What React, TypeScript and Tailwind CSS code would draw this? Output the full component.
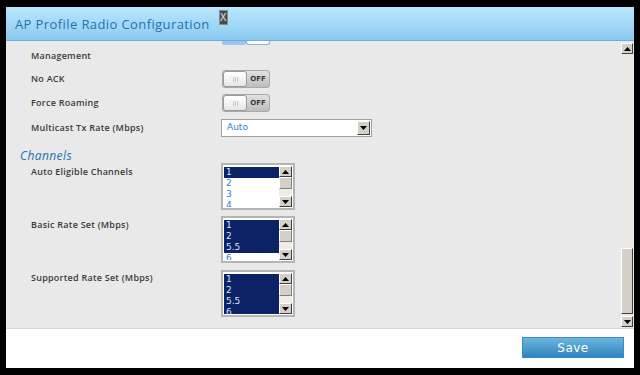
import React from 'react'

const labelFont = { fontFamily: '"Open Sans", "DejaVu Sans", sans-serif' }

function Toggle() {
  return (
    <div className="flex h-[18px] w-[48px] rounded-[3px] border border-[#a8a8a8] bg-gradient-to-b from-[#e2e2e2] to-[#bdbdbd]">
      <div className="flex h-full w-[24px] items-center justify-center gap-[1px] rounded-[3px] border border-[#9a9a9a] bg-gradient-to-b from-[#ffffff] to-[#e6e6e6]">
        <span className="h-[5px] w-[1px] bg-[#c8c8c8]" />
        <span className="h-[5px] w-[1px] bg-[#c8c8c8]" />
        <span className="h-[5px] w-[1px] bg-[#c8c8c8]" />
      </div>
      <div className="flex flex-1 items-center justify-center text-[7px] font-bold tracking-normal text-[#3a3a3a]" style={{ fontFamily: '"DejaVu Sans", sans-serif' }}>
        OFF
      </div>
    </div>
  )
}

function Arrow({ up }: { up?: boolean }) {
  return (
    <svg width="7" height="4" viewBox="0 0 7 4">
      {up ? <path d="M0 4 L3.5 0 L7 4 Z" fill="#000" /> : <path d="M0 0 L7 0 L3.5 4 Z" fill="#000" />}
    </svg>
  )
}

function SbButton({ up, h = 'h-[11px]' }: { up?: boolean; h?: string }) {
  return (
    <div className={`flex ${h} w-full items-center justify-center border border-t-white border-l-white border-r-[#404040] border-b-[#404040] bg-[#d4d0c8]`}>
      <Arrow up={up} />
    </div>
  )
}

function ListBox({ items, selected }: { items: string[]; selected: number }) {
  return (
    <div className="flex h-[47px] w-[74px] border-2 border-[#b4b4b4] bg-white p-[1px]">
      <div className="flex-1 overflow-hidden pt-[1px] font-normal tracking-normal" style={{ fontFamily: '"DejaVu Sans", sans-serif' }}>
        {items.map((it, i) => (
          <div
            key={it}
            className={`h-[11px] pl-[2px] text-[9px] leading-[11px] ${i < selected ? 'bg-[#0c2266] text-[#dce4f4]' : 'text-[#2c7fd0]'}`}
          >
            {it}
          </div>
        ))}
      </div>
      <div className="flex w-[13px] flex-col">
        <SbButton up />
        <div className="h-[12px] w-full border border-t-white border-l-white border-r-[#808080] border-b-[#808080] bg-[#d4d0c8]" />
        <div className="flex-1 bg-[#efece8]" />
        <SbButton />
      </div>
    </div>
  )
}

export default function App() {
  return (
    <div className="h-[375px] w-[640px] overflow-hidden bg-black pl-[6px] pt-[7px]">
      <div className="flex h-[361px] w-[628px] flex-col bg-white" style={labelFont}>
        {/* header */}
        <div className="flex h-[34px] items-start border-b border-[#6aaee0] bg-gradient-to-b from-[#b8e7fc] to-[#8ccaf0] pl-[9px]">
          <span className="mt-[9px] text-[13px] leading-[16px] tracking-[0.4px] text-[#2273b4]">
            AP Profile Radio Configuration
          </span>
          <span className="ml-[9px] mt-[3px] flex h-[15px] w-[9px] items-center justify-center border border-[#888] bg-[#4c4c4c] text-[10px] leading-none text-[#e0e0e0]" style={{ fontFamily: '"DejaVu Sans", sans-serif' }}>
            X
          </span>
        </div>

        {/* body */}
        <div className="flex h-[287px] bg-[#e9e9e9]">
          <div className="flex flex-1 flex-col overflow-hidden pl-[25px] text-[9px] font-semibold tracking-[0.25px] text-[#3b3b3b]">
            <div className="ml-[191px] flex h-[4px] w-[48px]">
              <div className="h-full w-[24px] rounded-b-[2px] bg-[#9cc6f0]" />
              <div className="h-full w-[24px] rounded-b-[3px] border border-t-0 border-[#8ab0d8] bg-white" />
            </div>
            <div className="mt-[5px] h-[12px] leading-[12px]">Management</div>

            <div className="mt-[8px] flex h-[18px] items-center">
              <span className="w-[191px]">No ACK</span>
              <Toggle />
            </div>
            <div className="mt-[6px] flex h-[18px] items-center">
              <span className="w-[191px]">Force Roaming</span>
              <Toggle />
            </div>
            <div className="mt-[7px] flex h-[18px] items-center">
              <span className="w-[190px]">Multicast Tx Rate (Mbps)</span>
              <div className="flex h-[18px] w-[151px] items-center border border-[#a0a0a0] bg-white pr-[1px]">
                <span className="flex-1 pl-[5px] text-[9px] font-normal tracking-normal text-[#2c7fd0]" style={{ fontFamily: '"DejaVu Sans", sans-serif' }}>Auto</span>
                <div className="flex h-[14px] w-[13px] items-center justify-center border border-t-white border-l-white border-r-[#404040] border-b-[#404040] bg-[#d4d0c8]">
                  <Arrow />
                </div>
              </div>
            </div>

            <div className="-ml-[11px] mt-[12px] h-[14px] text-[12px] font-normal italic leading-[14px] tracking-[0.4px] text-[#2273b4]">Channels</div>

            <div className="flex h-[47px] items-start">
              <span className="mt-[3px] w-[190px] leading-[12px]">Auto Eligible Channels</span>
              <ListBox items={['1', '2', '3', '4']} selected={1} />
            </div>
            <div className="mt-[6px] flex h-[47px] items-start">
              <span className="mt-[3px] w-[190px] leading-[12px]">Basic Rate Set (Mbps)</span>
              <ListBox items={['1', '2', '5.5', '6']} selected={3} />
            </div>
            <div className="mt-[7px] flex h-[47px] items-start">
              <span className="mt-[2px] w-[190px] leading-[12px]">Supported Rate Set (Mbps)</span>
              <ListBox items={['1', '2', '5.5', '6']} selected={4} />
            </div>
          </div>

          {/* page scrollbar */}
          <div className="flex w-[13px] flex-col bg-[#ece9e4] pb-[1px] pr-[1px] pt-[2px]">
            <SbButton up />
            <div className="h-[194px]" />
            <div className="h-[66px] border border-t-white border-l-white border-r-[#404040] border-b-[#404040] bg-[#d4d0c8]" />
            <div className="h-[2px]" />
            <SbButton />
          </div>
        </div>

        {/* footer */}
        <div className="flex flex-1 items-start justify-end border-t border-[#d8d8d8] bg-white pr-[10px] pt-[8px]">
          <button className="h-[21px] w-[102px] border border-[#3a8cc4] bg-gradient-to-b from-[#6cb6e0] to-[#2e84bc] text-[12px] tracking-[0.5px] text-white" style={{ fontFamily: '"DejaVu Sans", sans-serif' }}>
            Save
          </button>
        </div>
      </div>
    </div>
  )
}
